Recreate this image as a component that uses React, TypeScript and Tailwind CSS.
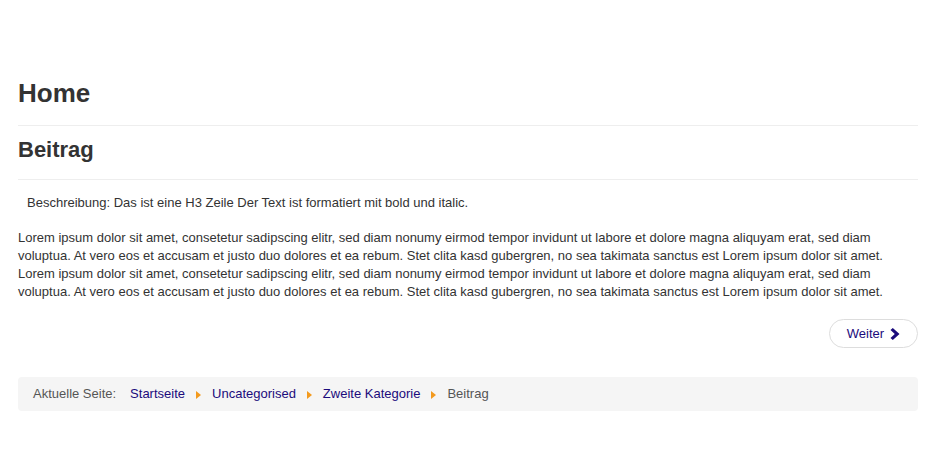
const Separator = () => (
    <span className="mx-[11px] inline-block align-middle">
        <svg width="5" height="8" viewBox="0 0 5 8" className="block mt-[2px]">
            <path d="M0 0 L5 4 L0 8 Z" fill="#F39A1E" />
        </svg>
    </span>
);

const Breadcrumb = () => (
    <div className="mt-[29px] h-[34px] flex items-center bg-[#f5f5f5] rounded-[4px] px-[15px] text-[13px] leading-[18px]">
        <span className="text-[#555555] mr-[14px]">Aktuelle Seite:</span>
        <a href="#" className="text-[#1b0b7c]">Startseite</a>
        <Separator />
        <a href="#" className="text-[#1b0b7c]">Uncategorised</a>
        <Separator />
        <a href="#" className="text-[#1b0b7c]">Zweite Kategorie</a>
        <Separator />
        <span className="text-[#555555]">Beitrag</span>
    </div>
);

const App = () => {
    return (
        <div className="min-h-screen bg-white text-[#333333] font-['Liberation_Sans',Arial,sans-serif]">
            <div className="w-[900px] ml-[18px] pt-[73px]">
                <h1 className="text-[26px] leading-[40px] font-bold">Home</h1>
                <div className="mt-[12px] border-t border-[#eeeeee]" />

                <h2 className="mt-[9px] text-[22px] leading-[30px] font-bold">Beitrag</h2>
                <div className="mt-[14px] border-t border-[#eeeeee]" />

                <div className="mt-[14px] ml-[9px] text-[13px] leading-[18px]">
                    Beschreibung: Das ist eine H3 Zeile Der Text ist formatiert mit bold und italic.
                </div>

                <p className="mt-[17px] text-[13px] leading-[18px]">
                    Lorem ipsum dolor sit amet, consetetur sadipscing elitr, sed diam nonumy eirmod tempor invidunt ut labore et dolore magna aliquyam erat, sed diam voluptua. At vero eos et accusam et justo duo dolores et ea rebum. Stet clita kasd gubergren, no sea takimata sanctus est Lorem ipsum dolor sit amet. Lorem ipsum dolor sit amet, consetetur sadipscing elitr, sed diam nonumy eirmod tempor invidunt ut labore et dolore magna aliquyam erat, sed diam voluptua. At vero eos et accusam et justo duo dolores et ea rebum. Stet clita kasd gubergren, no sea takimata sanctus est Lorem ipsum dolor sit amet.
                </p>

                <div className="mt-[18px] flex justify-end">
                    <a href="#" className="h-[29px] w-[89px] flex items-center justify-center gap-[6px] rounded-full border border-[#dddddd] text-[13px] text-[#1b0b7c]">
                        <span>Weiter</span>
                        <svg width="10" height="12" viewBox="0 0 10 12" className="block">
                            <path d="M0.5 2 L2.8 0 L9.5 6 L2.8 12 L0.5 10 L4.8 6 Z" fill="#1b0b7c" />
                        </svg>
                    </a>
                </div>

                <Breadcrumb />
            </div>
        </div>
    );
};

export default App;
